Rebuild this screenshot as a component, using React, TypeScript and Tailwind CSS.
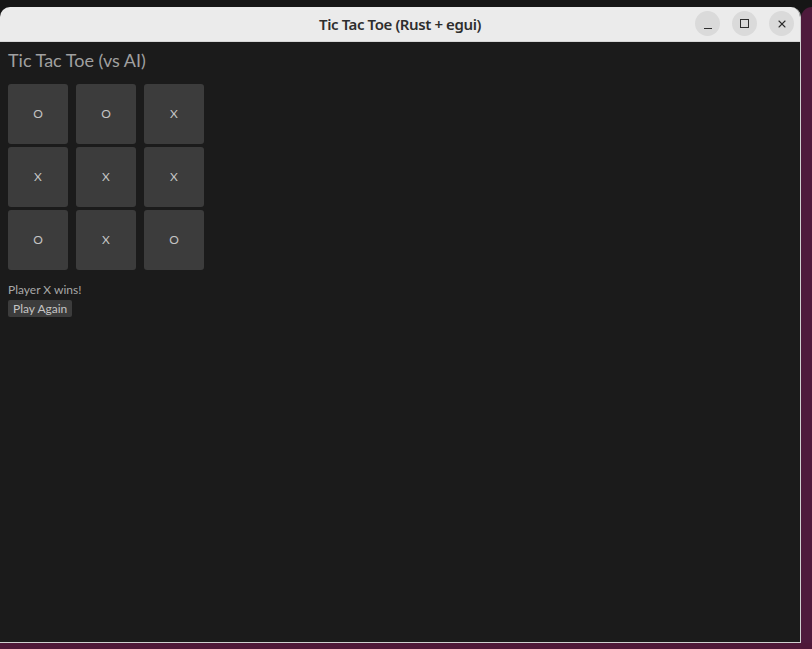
import { X } from "lucide-react";

const BOARD = ["O", "O", "X", "X", "X", "X", "O", "X", "O"];

export default function App() {
  return (
    <div className="w-[812px] h-[649px] flex flex-col bg-[#161616] overflow-hidden font-['Lato',sans-serif]">
      <div className="h-[7px] shrink-0" />
      <div className="flex flex-1 min-h-0">
        {/* window */}
        <div className="w-[801px] shrink-0 flex flex-col rounded-t-[10px] overflow-hidden border-r border-[#cfcfcf] bg-[#1b1b1b]">
          {/* title bar */}
          <div className="h-[35px] shrink-0 relative flex items-center justify-center bg-[#ebebeb] border-b border-[#d6d6d6]">
            <span className="text-[15px] font-semibold text-[#2e2e2e] font-['Noto_Sans',sans-serif] tracking-[-0.4px]">
              Tic Tac Toe (Rust + egui)
            </span>
            <div className="absolute right-[6px] top-[4px] flex gap-[12px]">
              <div className="w-[25px] h-[25px] rounded-full bg-[#dadada] flex items-end justify-center pb-[7px]">
                <div className="w-[8px] h-[1.5px] bg-[#2e2e2e]" />
              </div>
              <div className="w-[25px] h-[25px] rounded-full bg-[#dadada] flex items-center justify-center">
                <div className="w-[9px] h-[9px] border-[1.5px] border-[#2e2e2e]" />
              </div>
              <div className="w-[25px] h-[25px] rounded-full bg-[#dadada] flex items-center justify-center">
                <X size={12} strokeWidth={2.2} color="#2e2e2e" />
              </div>
            </div>
          </div>

          {/* content */}
          <div className="flex-1 px-2 pt-[6px] text-[#a8a8a8]">
            <h1 className="text-[18px] leading-[24px] font-normal text-[#a0a0a0]">Tic Tac Toe (vs AI)</h1>
            <div className="grid grid-cols-[60px_60px_60px] gap-x-2 gap-y-[3px] mt-[12px]">
              {BOARD.map((c, i) => (
                <div
                  key={i}
                  className="h-[60px] rounded-[3px] bg-[#3c3c3c] flex items-center justify-center text-[12px] text-[#c4c4c4]"
                >
                  {c}
                </div>
              ))}
            </div>
            <p className="mt-[12px] text-[12px] leading-[16px] text-[#a8a8a8]">Player X wins!</p>
            <button className="block mt-[2px] h-[17px] px-[5px] rounded-[2px] bg-[#3c3c3c] text-[12px] leading-[17px] text-[#c4c4c4]">
              Play Again
            </button>
          </div>
          <div className="h-px shrink-0 bg-[#d0d0d0]" />
        </div>
        <div className="flex-1 bg-[#4e1a3c] rounded-tl-[14px]" />
      </div>
      <div className="h-[6px] shrink-0 bg-[#4e1838]" />
    </div>
  );
}
